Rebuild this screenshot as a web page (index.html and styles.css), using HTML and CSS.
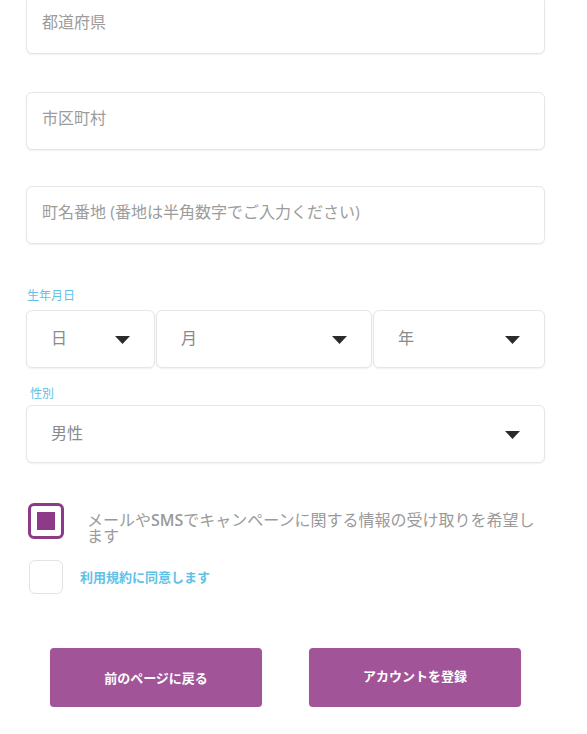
FILE: index.html
```html
<!DOCTYPE html>
<html lang="ja">
<head>
<meta charset="utf-8">
<title>アカウント登録</title>
<link rel="stylesheet" href="styles.css">
</head>
<body>
<form class="form">
  <input class="field field-first" type="text" placeholder="都道府県">
  <input class="field field-gap" type="text" placeholder="市区町村">
  <input class="field field-gap2" type="text" placeholder="町名番地 (番地は半角数字でご入力ください)">

  <div class="label label-birth">生年月日</div>
  <div class="birth-row">
    <div class="select"><span class="select-text">日</span><svg class="caret" width="15" height="8" viewBox="0 0 15 8"><path d="M0 0H15L7.5 8Z" fill="#2b2b2b"/></svg></div>
    <div class="select"><span class="select-text">月</span><svg class="caret" width="15" height="8" viewBox="0 0 15 8"><path d="M0 0H15L7.5 8Z" fill="#2b2b2b"/></svg></div>
    <div class="select"><span class="select-text">年</span><svg class="caret" width="15" height="8" viewBox="0 0 15 8"><path d="M0 0H15L7.5 8Z" fill="#2b2b2b"/></svg></div>
  </div>

  <div class="label label-gender">性別</div>
  <div class="select select-wide"><span class="select-text">男性</span><svg class="caret" width="15" height="8" viewBox="0 0 15 8"><path d="M0 0H15L7.5 8Z" fill="#2b2b2b"/></svg></div>

  <div class="check-row check-row-1">
    <div class="checkbox checked"><div class="check-fill"></div></div>
    <div class="check-text">メールや<span class="latin">SMS</span>でキャンペーンに関する情報の受け取りを希望します</div>
  </div>
  <div class="check-row check-row-2">
    <div class="checkbox"></div>
    <div class="terms-text">利用規約に同意します</div>
  </div>

  <div class="buttons">
    <button type="button" class="btn">前のページに戻る</button>
    <button type="button" class="btn btn-up">アカウントを登録</button>
  </div>
</form>
</body>
</html>
```

FILE: styles.css
```css
html, body {
  margin: 0;
  padding: 0;
  background: #ffffff;
}

body {
  font-family: "Open Sans", "Noto Sans CJK JP", sans-serif;
  overflow: hidden;
}

.form {
  display: flex;
  flex-direction: column;
  padding: 0 42px 0 26px;
  margin-top: -4px;
}

.field {
  display: block;
  box-sizing: border-box;
  width: 100%;
  height: 58px;
  margin: 0;
  padding: 0 15px 6px;
  border: 1px solid #e6e6e6;
  border-radius: 6px;
  box-shadow: 0 1px 2px rgba(0, 0, 0, 0.06);
  background: #fff;
  font-family: "Open Sans", "Noto Sans CJK JP", sans-serif;
  font-size: 16px;
  color: #555;
  outline: none;
}

.field::placeholder {
  color: #9c9c9c;
}

.field-gap {
  margin-top: 38px;
}

.field-gap2 {
  margin-top: 36px;
}

.label {
  font-size: 12px;
  line-height: 16px;
  color: #62c1e6;
  font-family: "Noto Sans CJK JP", sans-serif;
}

.label-birth {
  margin-top: 43px;
  padding-left: 1px;
}

.label-gender {
  margin-top: 17px;
  padding-left: 4px;
}

.birth-row {
  display: grid;
  grid-template-columns: 129px 216px 172px;
  gap: 1px;
  margin-top: 7px;
}

.label-gender + .select-wide {
  margin-top: 4px;
}

.select {
  box-sizing: border-box;
  height: 58px;
  border: 1px solid #e6e6e6;
  border-radius: 6px;
  box-shadow: 0 1px 2px rgba(0, 0, 0, 0.06);
  display: flex;
  align-items: center;
  justify-content: space-between;
  padding: 0 24px 0 24px;
  background: #fff;
}

.select-text {
  font-size: 16px;
  color: #8a8a8a;
  line-height: 20px;
  margin-top: -2px;
}

.caret {
  display: block;
  margin-top: 2px;
}

.check-row {
  display: flex;
  align-items: center;
}

.check-row-1 {
  margin-top: 40px;
  align-items: flex-start;
}

.check-row-2 {
  margin-top: 16px;
}

.checkbox {
  box-sizing: border-box;
  width: 34px;
  height: 34px;
  border: 1px solid #e3e3e3;
  border-radius: 6px;
  margin-left: 3px;
  flex: none;
  background: #fff;
}

.checkbox.checked {
  width: 36px;
  height: 36px;
  margin-left: 2px;
  border: 3px solid #8d3b88;
  border-radius: 6px;
  padding: 6px;
}

.check-fill {
  width: 18px;
  height: 18px;
  background: #8d3b88;
}

.check-text {
  margin-left: 23px;
  margin-top: 9px;
  font-size: 16px;
  line-height: 16px;
  color: #9a9a9a;
  flex: 1;
}

.latin {
  font-weight: 600;
  font-family: "Open Sans", sans-serif;
}

.terms-text {
  margin-left: 17px;
  font-size: 13px;
  font-weight: 700;
  color: #62c1e6;
  font-family: "Noto Sans CJK JP", sans-serif;
  line-height: 18px;
}

.buttons {
  display: flex;
  justify-content: space-between;
  margin-top: 54px;
  padding: 0 24px 0 24px;
}

.btn {
  width: 212px;
  height: 59px;
  border: none;
  border-radius: 4px;
  background: #a15598;
  color: #ffffff;
  font-family: "Noto Sans CJK JP", sans-serif;
  font-size: 13px;
  font-weight: 700;
  padding: 0;
  box-shadow: 0 1px 2px rgba(0, 0, 0, 0.08);
}

.btn-up {
  padding-bottom: 4px;
}
```
